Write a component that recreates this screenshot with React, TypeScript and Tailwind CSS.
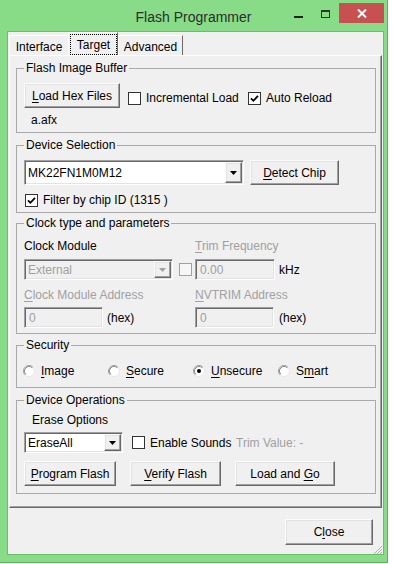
import type { ReactNode } from 'react';

const RAISED =
  'bg-[#f0f0f0] border border-t-[#fcfcfc] border-l-[#fcfcfc] border-r-[#696969] border-b-[#696969] shadow-[inset_-1px_-1px_0_#a0a0a0,inset_1px_1px_0_#e3e3e3]';
const SUNKEN =
  'border border-t-[#a0a0a0] border-l-[#a0a0a0] border-r-white border-b-white shadow-[inset_1px_1px_0_#696969,inset_-1px_-1px_0_#e3e3e3]';
const GRAY = 'text-[#a0a0a0]';

function U({ children }: { children: ReactNode }) {
  return <span className="underline decoration-1 underline-offset-2">{children}</span>;
}

function WinButton({ className = '', children }: { className?: string; children: ReactNode }) {
  return (
    <button
      type="button"
      className={`${RAISED} flex items-center justify-center leading-[14px] text-black ${className}`}
    >
      <span className="whitespace-pre">{children}</span>
    </button>
  );
}

function CheckBox({ checked = false, disabled = false }: { checked?: boolean; disabled?: boolean }) {
  return (
    <span
      className={`flex h-[13px] w-[13px] shrink-0 items-center justify-center border ${
        disabled ? 'border-[#a0a0a0] bg-[#f6f6f6]' : 'border-[#333] bg-white'
      }`}
    >
      {checked && (
        <svg width="9" height="9" viewBox="0 0 9 9">
          <path d="M1 4.3 L3.4 6.8 L8 1.8" fill="none" stroke="#000" strokeWidth="1.8" />
        </svg>
      )}
    </span>
  );
}

function CheckLabel({
  checked = false,
  className = '',
  children,
}: {
  checked?: boolean;
  className?: string;
  children: ReactNode;
}) {
  return (
    <label className={`flex h-[14px] items-center gap-[5px] leading-[14px] ${className}`}>
      <CheckBox checked={checked} />
      <span>{children}</span>
    </label>
  );
}

function Radio({ checked = false }: { checked?: boolean }) {
  return (
    <svg width="12" height="12" viewBox="0 0 12 12" className="shrink-0">
      <circle cx="6" cy="6" r="5.5" fill="#fff" stroke="#e6e6e6" />
      <path d="M2.11 9.89 A5.5 5.5 0 0 1 9.89 2.11" fill="none" stroke="#a0a0a0" />
      <path d="M2.82 9.18 A4.5 4.5 0 0 1 9.18 2.82" fill="none" stroke="#8a8a8a" />
      {checked && <circle cx="6" cy="6" r="2" fill="#000" />}
    </svg>
  );
}

function Combo({
  value,
  disabled = false,
  className = '',
}: {
  value: string;
  disabled?: boolean;
  className?: string;
}) {
  return (
    <div
      className={`${SUNKEN} flex p-[1px] ${disabled ? `bg-[#f0f0f0] ${GRAY}` : 'bg-white'} ${className}`}
    >
      <span className="flex flex-1 items-center pl-[2px] leading-[14px]">{value}</span>
      <span className={`${RAISED} flex w-[17px] items-center justify-center`}>
        <svg width="7" height="4" viewBox="0 0 7 4">
          <path d="M0 0h7L3.5 4z" fill={disabled ? '#a0a0a0' : '#000'} />
        </svg>
      </span>
    </div>
  );
}

function Field({ value, className = '' }: { value: string; className?: string }) {
  return (
    <div
      className={`${SUNKEN} flex items-center bg-[#f0f0f0] pl-[4px] leading-[14px] ${GRAY} ${className}`}
    >
      {value}
    </div>
  );
}

function Group({
  title,
  className = '',
  children,
}: {
  title: string;
  className?: string;
  children: ReactNode;
}) {
  return (
    <fieldset className={`w-[360px] border border-[#a9a9a9] px-[7px] ${className}`}>
      <legend className="px-[2px] leading-[14px]">{title}</legend>
      {children}
    </fieldset>
  );
}

function TitleBar() {
  return (
    <div className="grid h-[31px] grid-cols-[1fr_auto_1fr]">
      <div />
      <div className="pt-[8px] text-[14px] leading-[18px] text-[#2d2d2d]">Flash Programmer</div>
      <div className="flex justify-end pr-[3px]">
        <div className="mt-[3px] flex h-[20px] w-[27px] justify-center pt-[13px]">
          <svg width="9" height="2" viewBox="0 0 9 2">
            <rect width="9" height="2" fill="#222" />
          </svg>
        </div>
        <div className="mt-[3px] flex h-[20px] w-[27px] justify-center pt-[7px]">
          <svg width="9" height="8" viewBox="0 0 9 8">
            <rect x="0.5" y="0.5" width="8" height="7" fill="none" stroke="#333" />
            <rect x="0" y="0" width="9" height="2" fill="#333" />
          </svg>
        </div>
        <div className="mt-[3px] flex h-[20px] w-[45px] items-center justify-center bg-[#c75050]">
          <svg width="10" height="9" viewBox="0 0 10 9">
            <path d="M1 0.5 L9 8.5 M9 0.5 L1 8.5" stroke="#fff" strokeWidth="2" />
          </svg>
        </div>
      </div>
    </div>
  );
}

function Tabs() {
  return (
    <div className="flex h-[23px] items-end pl-[1px]">
      <div className="flex h-[20px] w-[59px] justify-center border-t border-l border-t-white border-l-white pt-[4px] leading-[14px]">
        Interface
      </div>
      <div className="flex h-[23px] w-[50px] flex-col border-t border-r border-l border-t-white border-r-[#696969] border-l-white">
        <div className="mt-[1px] ml-[1px] flex flex-1 items-center justify-center border border-dotted border-black leading-[14px]">
          Target
        </div>
      </div>
      <div className="flex h-[20px] w-[65px] justify-center border-t border-r border-l border-t-white border-r-[#696969] border-l-white pt-[4px] leading-[14px]">
        Advanced
      </div>
    </div>
  );
}

function TargetPanel() {
  return (
    <div className="ml-[1px] h-[453px] w-[373px] border border-t-white border-r-[#696969] border-b-[#696969] border-l-white pt-[5px] pl-[6px] shadow-[inset_-1px_-1px_0_#a0a0a0]">
      <Group title="Flash Image Buffer" className="h-[72px] pt-[8px]">
        <div className="flex h-[25px] items-start">
          <WinButton className="h-[25px] w-[96px]">
            <U>L</U>oad Hex Files
          </WinButton>
          <CheckLabel className="mt-[8px] ml-[8px] w-[120px]">Incremental Load</CheckLabel>
          <CheckLabel checked className="mt-[8px]">
            Auto Reload
          </CheckLabel>
        </div>
        <div className="mt-[5px] pl-[7px] leading-[14px]">a.afx</div>
      </Group>

      <Group title="Device Selection" className="mt-[5px] h-[75px] pt-[8px]">
        <div className="flex">
          <Combo value="MK22FN1M0M12" className="h-[25px] w-[220px]" />
          <WinButton className="ml-[6px] h-[25px] w-[89px]">
            <U>D</U>etect Chip
          </WinButton>
        </div>
        <CheckLabel checked className="mt-[8px] ml-[1px]">
          Filter by chip ID (1315 )
        </CheckLabel>
      </Group>

      <Group title="Clock type and parameters" className="mt-[3px] h-[118px] pt-[9px]">
        <div className="flex leading-[14px]">
          <div className="w-[171px]">Clock Module</div>
          <div className={GRAY}>
            <U>T</U>rim Frequency
          </div>
        </div>
        <div className="mt-[6px] flex items-center">
          <div className="flex w-[171px] items-center">
            <Combo value="External" disabled className="h-[21px] w-[149px]" />
            <span className="ml-[6px]">
              <CheckBox disabled />
            </span>
          </div>
          <Field value="0.00" className="h-[21px] w-[80px]" />
          <span className="ml-[4px] leading-[14px]">kHz</span>
        </div>
        <div className={`mt-[8px] flex leading-[14px] ${GRAY}`}>
          <div className="w-[171px]">
            <U>C</U>lock Module Address
          </div>
          <div>
            <U>N</U>VTRIM Address
          </div>
        </div>
        <div className="mt-[5px] flex items-center">
          <div className="flex w-[171px] items-center">
            <Field value="0" className="h-[21px] w-[79px]" />
            <span className="ml-[4px] leading-[14px]">(hex)</span>
          </div>
          <Field value="0" className="h-[21px] w-[79px]" />
          <span className="ml-[5px] leading-[14px]">(hex)</span>
        </div>
      </Group>

      <Group title="Security" className="mt-[4px] h-[50px] pt-[12px]">
        <div className="-ml-[1px] flex leading-[14px]">
          <label className="flex w-[85px] items-center gap-[6px]">
            <Radio />
            <span>
              <U>I</U>mage
            </span>
          </label>
          <label className="flex w-[85px] items-center gap-[6px]">
            <Radio />
            <span>
              <U>S</U>ecure
            </span>
          </label>
          <label className="flex w-[85px] items-center gap-[6px]">
            <Radio checked />
            <span>
              <U>U</U>nsecure
            </span>
          </label>
          <label className="flex w-[85px] items-center gap-[6px]">
            <Radio />
            <span>
              S<U>m</U>art
            </span>
          </label>
        </div>
      </Group>

      <Group title="Device Operations" className="mt-[5px] h-[101px] pt-[6px]">
        <div className="pl-[8px] leading-[14px]">Erase Options</div>
        <div className="mt-[5px] flex items-center">
          <Combo value="EraseAll" className="h-[21px] w-[99px]" />
          <CheckLabel className="ml-[9px] w-[104px]">Enable Sounds</CheckLabel>
          <span className={`leading-[14px] ${GRAY}`}>Trim Value: -</span>
        </div>
        <div className="mt-[8px] flex">
          <WinButton className="h-[25px] w-[92px]">
            <U>P</U>rogram Flash
          </WinButton>
          <WinButton className="ml-[14px] h-[25px] w-[91px]">
            <U>V</U>erify Flash
          </WinButton>
          <WinButton className="ml-[14px] h-[25px] w-[100px]">
            Load and <U>G</U>o
          </WinButton>
        </div>
      </Group>
    </div>
  );
}

export default function App() {
  return (
    <div className="h-[564px] w-[393px] bg-white font-['Liberation_Sans',Arial,sans-serif] text-[12px] text-black">
      <div className="flex h-[563px] w-[388px] flex-col border-r border-b border-[#62b062] bg-[#88dc88]">
        <TitleBar />
        <div className="mr-[3px] ml-[7px] flex h-[524px] flex-col border border-[#6cbc6c] bg-[#f0f0f0]">
          <Tabs />
          <TargetPanel />
          <div className="mt-[11px] flex justify-end pr-[10px]">
            <WinButton className="h-[26px] w-[88px]">
              C<U>l</U>ose
            </WinButton>
          </div>
          <div className="flex h-[9px] justify-end">
            <svg width="10" height="9" viewBox="0 0 10 9">
              <path d="M9 1 L1 9 M9 4 L4 9 M9 7 L7 9" stroke="#b0b0b0" strokeWidth="1" />
            </svg>
          </div>
        </div>
      </div>
    </div>
  );
}
